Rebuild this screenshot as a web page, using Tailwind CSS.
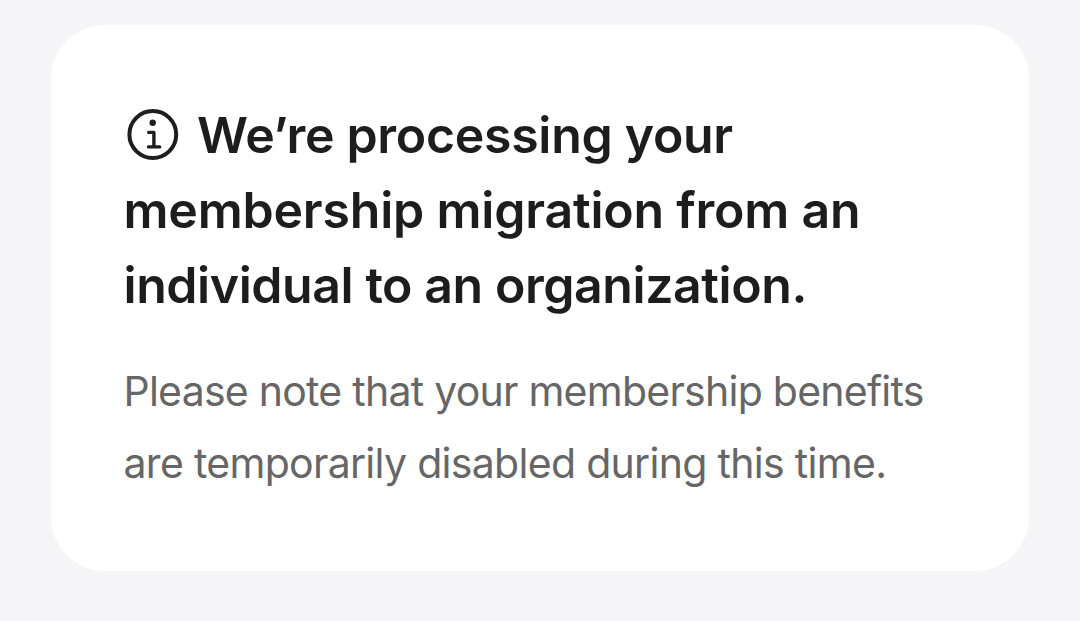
<!DOCTYPE html>
<html lang="en">
<head>
<meta charset="utf-8">
<title>Membership</title>
<script src="https://cdn.jsdelivr.net/npm/@tailwindcss/browser@4"></script>
</head>
<body class="bg-[#f5f5f7] font-['Inter',sans-serif] h-[621px] overflow-hidden pt-[25px] px-[51px]">
<section class="bg-white rounded-[54px] h-[546px] w-[978px] pl-[72.5px] pt-[73px]">
<h1 class="text-[50px] leading-[75px] font-[570] text-[#1d1d1f] whitespace-nowrap">
<span class="flex items-center h-[75px]"><svg class="w-[52px] h-[52px] ml-[3.5px] mr-[18px] mb-px" viewBox="0 0 52 52" fill="none" stroke="#1d1d1f" stroke-linecap="round" stroke-linejoin="round"><circle cx="25.8" cy="25.5" r="23.400" stroke-width="4"/><circle cx="25.700" cy="13.800" r="3.200" fill="#1d1d1f" stroke="none"/><path d="M21.700 23.400h5.200v14.300M21.500 37.900h11.200" stroke-width="3.400"/></svg><span class="tracking-[-0.3px]">We’re processing your</span></span>
<span class="block tracking-[-0.2px]">membership migration from an</span>
<span class="block tracking-[-0.43px]">individual to an organization.</span>
</h1>
<p class="mt-[32px] text-[41px] leading-[72px] text-[#666666] whitespace-nowrap">
<span class="block tracking-[-0.75px]">Please note that your membership benefits</span>
<span class="block tracking-[-0.7px]">are temporarily disabled during this time.</span>
</p>
</section>
</body>
</html>
